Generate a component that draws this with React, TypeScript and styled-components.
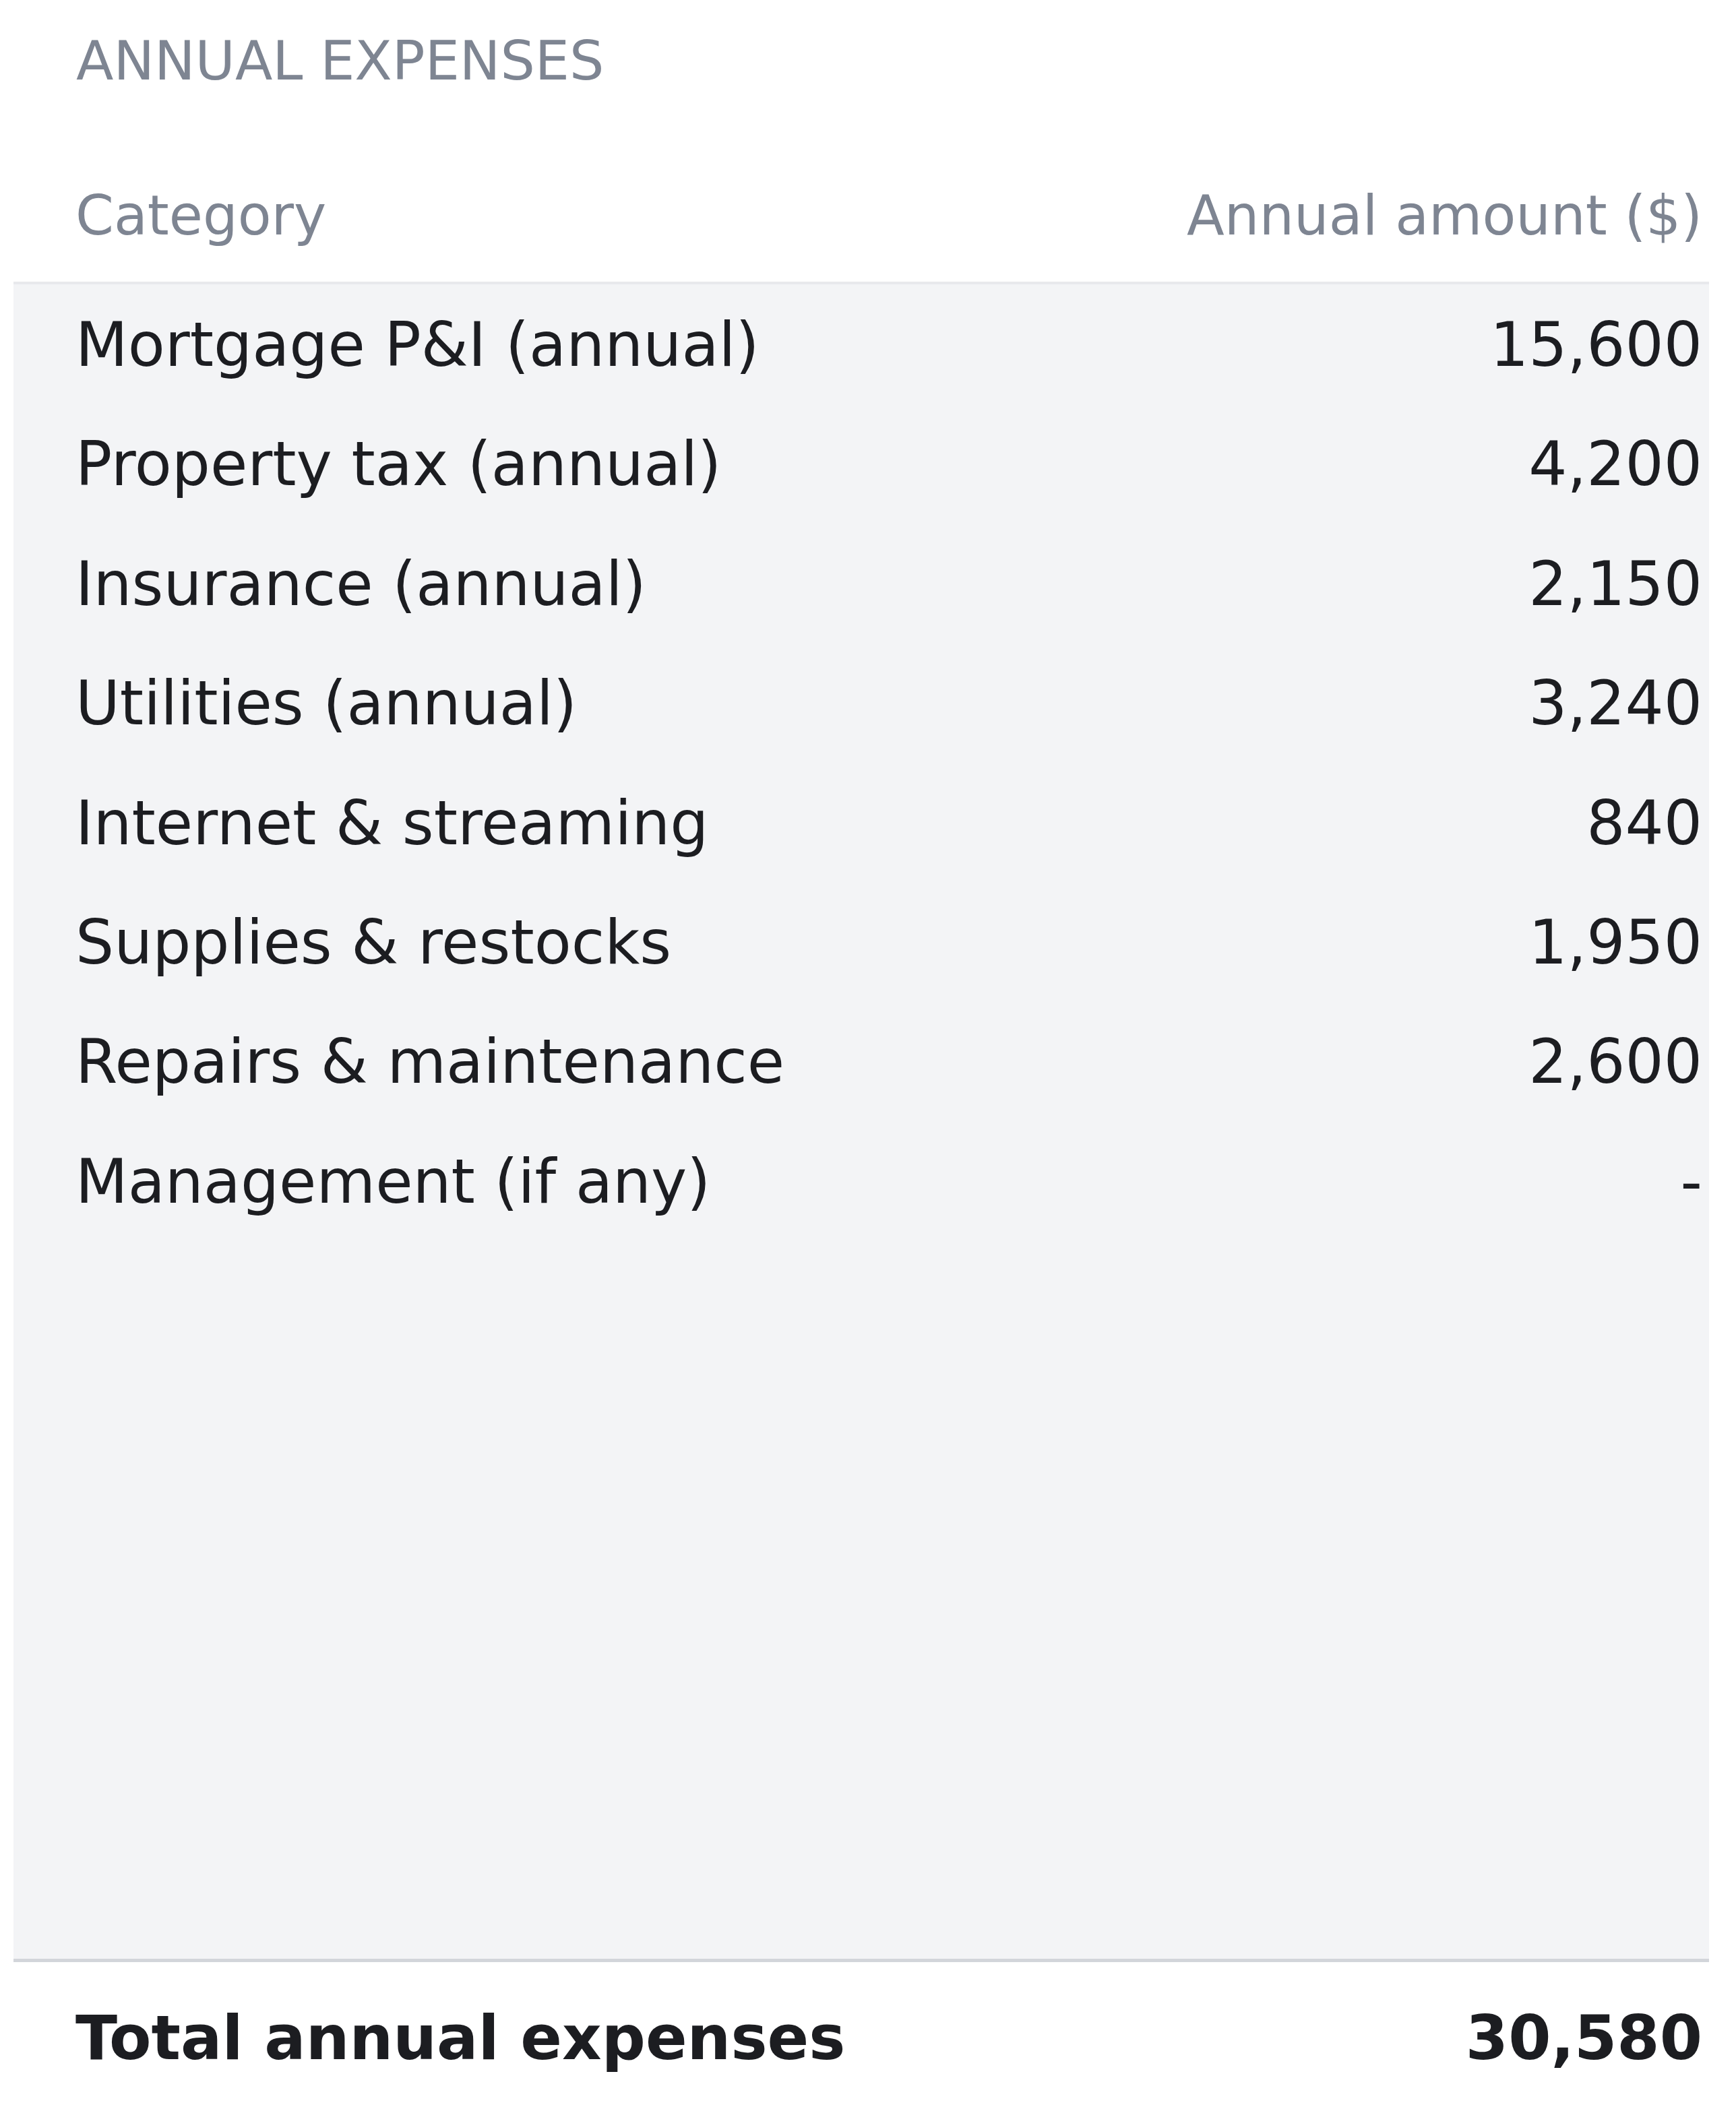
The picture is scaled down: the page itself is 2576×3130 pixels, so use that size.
import styled, { createGlobalStyle } from 'styled-components';

const Global = createGlobalStyle`
  html, body {
    margin: 0;
    padding: 0;
    background: #ffffff;
  }
  body {
    font-family: "DejaVu Sans", "Noto Sans", sans-serif;
    color: #1c1d21;
  }
`

const Page = styled.div`
  box-sizing: border-box;
  width: 2576px;
  height: 3130px;
  overflow: hidden;
  padding: 42px 40px 0 20px;
  display: flex;
  flex-direction: column;
`

const Title = styled.h2`
  margin: 0;
  padding-left: 93px;
  font-size: 81px;
  line-height: 97px;
  font-weight: 400;
  color: #7e8592;
`

const Row = styled.div<{ $variant?: 'head' | 'body' | 'total' }>`
  display: flex;
  justify-content: space-between;
  align-items: baseline;
  padding: ${({ $variant }) =>
    $variant === 'head'
      ? '0 10px 50px 92px'
      : $variant === 'total'
      ? '45px 10px 0 92px'
      : '22px 10px 20.4px 92px'};
  font-size: ${({ $variant }) =>
    $variant === 'head' ? '81.5px' : $variant === 'total' ? '91px' : '90px'};
  line-height: ${({ $variant }) => ($variant === 'head' ? '97px' : '135px')};
  font-weight: ${({ $variant }) => ($variant === 'total' ? 700 : 400)};
  color: ${({ $variant }) => ($variant === 'head' ? '#7e8592' : '#1c1d21')};
  white-space: nowrap;
`

const Header = styled(Row)`
  margin-top: 132px;
`

const Body = styled.div`
  box-sizing: content-box;
  height: 2485px;
  background: #f3f4f6;
  border-top: 4px solid #e8e9ec;
  border-bottom: 5px solid #d2d5da;
  display: flex;
  flex-direction: column;
`

const Amount = styled.span`
  text-align: right;
`

const expenses: [string, string][] = [
  ['Mortgage P&I (annual)', '15,600'],
  ['Property tax (annual)', '4,200'],
  ['Insurance (annual)', '2,150'],
  ['Utilities (annual)', '3,240'],
  ['Internet & streaming', '840'],
  ['Supplies & restocks', '1,950'],
  ['Repairs & maintenance', '2,600'],
  ['Management (if any)', '-'],
]

const App = () => {
  return (
    <>
      <Global />
      <Page>
        <Title>ANNUAL EXPENSES</Title>
        <Header $variant="head">
          <span>Category</span>
          <Amount>Annual amount ($)</Amount>
        </Header>
        <Body>
          {expenses.map(([label, value]) => (
            <Row key={label}>
              <span>{label}</span>
              <Amount>{value}</Amount>
            </Row>
          ))}
        </Body>
        <Row $variant="total">
          <span>Total annual expenses</span>
          <Amount>30,580</Amount>
        </Row>
      </Page>
    </>
  )
}

export default App
